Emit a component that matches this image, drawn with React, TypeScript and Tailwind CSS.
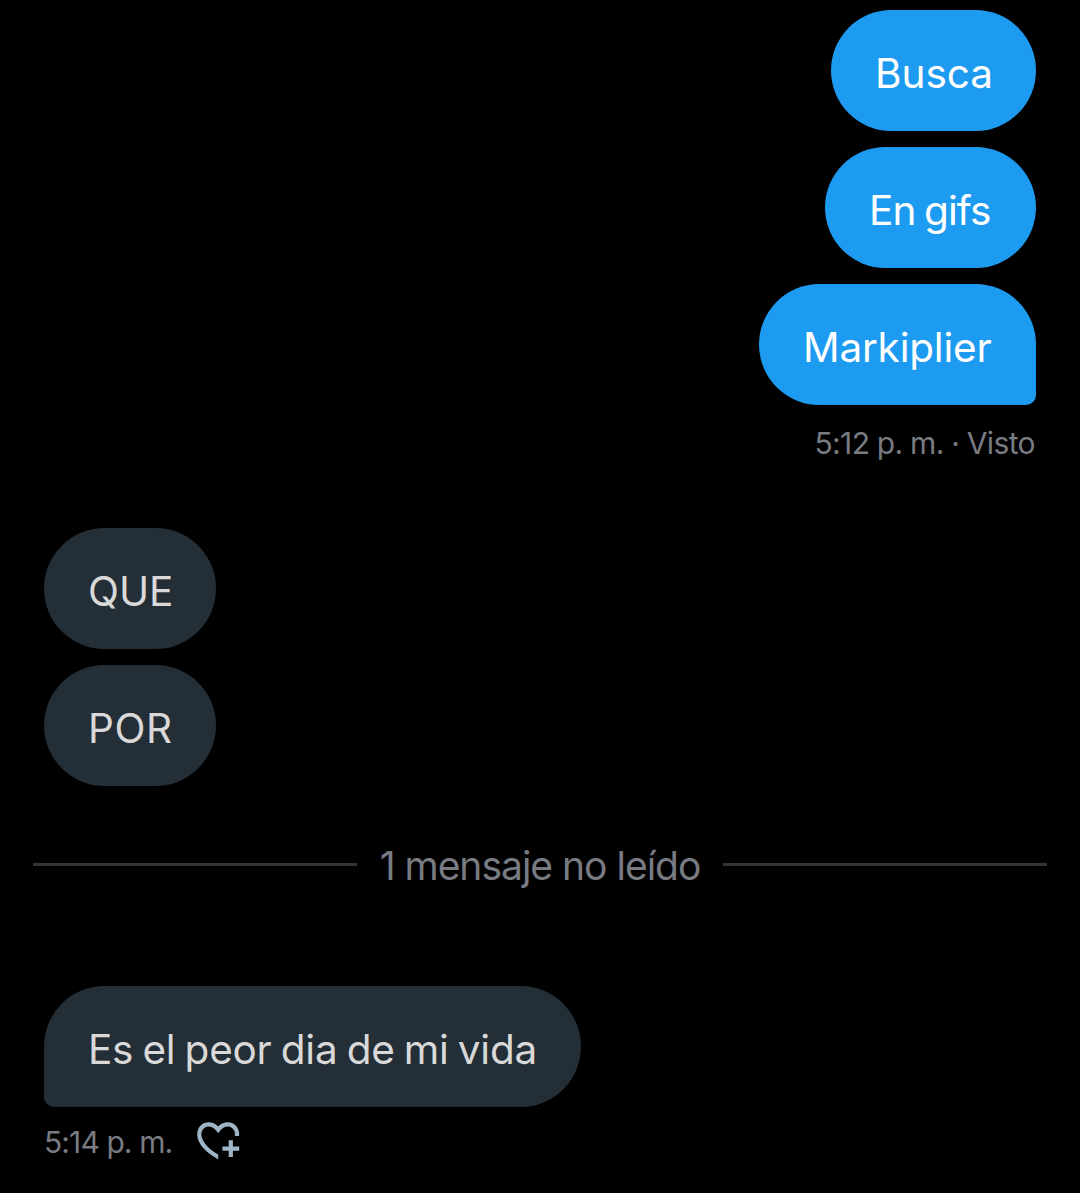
import React from 'react';
import clsx from 'clsx';

type BubbleProps = {
  text: string;
  mine?: boolean;
  last?: boolean;
  className?: string;
};

const Bubble: React.FC<BubbleProps> = ({ text, mine, last, className }) => (
  <div
    className={clsx(
      'h-[121px] px-11 pt-[7px] flex items-center text-[40.5px] leading-none whitespace-nowrap rounded-t-[60.5px]',
      mine ? 'self-end bg-[#1d9bf0] text-white rounded-bl-[60.5px]' : 'self-start bg-[#242e36] text-[#d9d9d9] rounded-br-[60.5px]',
      mine && (last ? 'rounded-br-[10px]' : 'rounded-br-[60.5px]'),
      !mine && (last ? 'rounded-bl-[10px]' : 'rounded-bl-[60.5px]'),
      className
    )}
  >
    <span>{text}</span>
  </div>
);

const HeartPlusIcon = () => (
  <svg viewBox="0 0 24 24" className="w-[50.4px] h-[50.4px] shrink-0 text-[#9fb4c4]" fill="currentColor">
    <path d="M17 12v3h-2.998v2h3v3h2v-3h3v-2h-3.001v-3H17zm-5 6.839c-3.871-2.34-6.053-4.639-7.127-6.609-1.112-2.04-1.031-3.7-.479-4.82.561-1.13 1.667-1.84 2.91-1.91 1.222-.06 2.68.51 3.892 2.16l.806 1.09.805-1.09c1.211-1.65 2.668-2.22 3.89-2.16 1.242.07 2.347.78 2.908 1.91.334.677.49 1.554.321 2.59h2.011c.153-1.283-.039-2.469-.539-3.48-.887-1.79-2.647-2.91-4.601-3.01-1.65-.09-3.367.56-4.796 2.01-1.43-1.45-3.147-2.1-4.798-2.01-1.954.1-3.714 1.22-4.601 3.01-.896 1.81-.846 4.17.514 6.67 1.353 2.48 4.003 5.12 8.382 7.67l.502.299v-2.32z" />
  </svg>
);

export default function App() {
  return (
    <main className="w-[1080px] h-[1193px] bg-black overflow-hidden font-['Inter',sans-serif] flex flex-col pt-2.5">
      {/* Sent messages */}
      <section className="flex flex-col gap-4 px-11">
        <Bubble mine text="Busca" className="w-[205px]" />
        <Bubble mine text="En gifs" className="w-[211px] tracking-[-0.9px] [word-spacing:-2px]" />
        <Bubble mine last text="Markiplier" className="w-[277px] tracking-[-0.2px]" />
      </section>
      <p className="mt-[22px] pr-[45px] h-[32px] self-end text-[30px] leading-[32px] tracking-[-0.6px] [word-spacing:-0.4px] text-[#787c82] whitespace-nowrap">
        5:12 p. m. · Visto
      </p>

      {/* Received messages */}
      <section className="mt-[69px] flex flex-col gap-4 px-11">
        <Bubble text="QUE" className="w-[172px]" />
        <Bubble text="POR" className="w-[172px] tracking-[0.6px]" />
      </section>

      {/* Unread divider */}
      <div className="mt-[53px] h-[50px] px-[33px] flex items-center">
        <div className="h-[3px] w-[324px] bg-[#333436]" />
        <p className="flex-1 text-center text-[39px] leading-none pt-[3px] tracking-[-1px] text-[#787c82] whitespace-nowrap">
          1 mensaje no leído
        </p>
        <div className="h-[3px] w-[324px] bg-[#333436]" />
      </div>

      <section className="mt-[97px] flex flex-col px-11">
        <Bubble last text="Es el peor dia de mi vida" className="w-[537px] tracking-[-0.25px] [word-spacing:-1.9px]" />
        <div className="mt-[8px] h-[50px] flex items-center">
          <p className="w-[149px] pt-[4px] text-[30px] leading-[32px] tracking-[-0.9px] text-[#787c82] whitespace-nowrap">
            5:14 p. m.
          </p>
          <HeartPlusIcon />
        </div>
      </section>
    </main>
  );
}
